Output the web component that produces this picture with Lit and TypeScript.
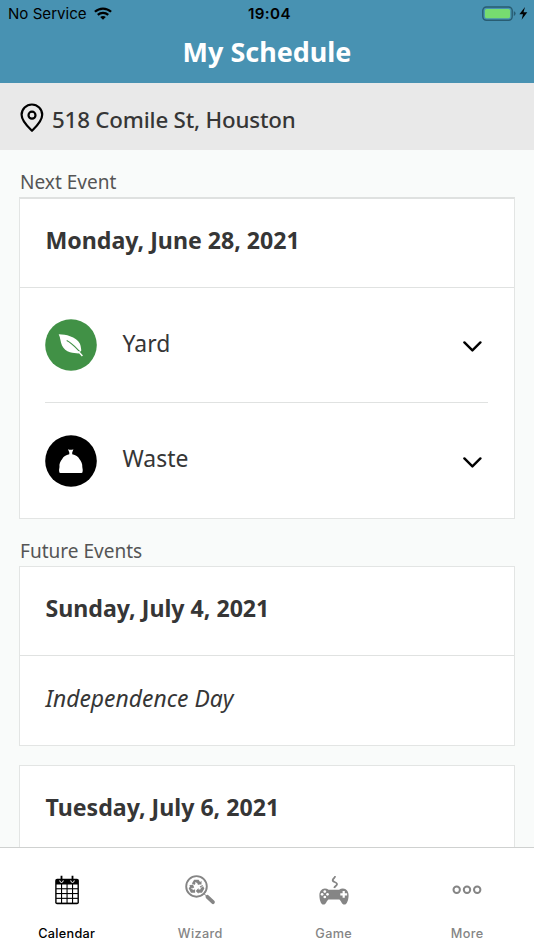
import { LitElement, html, css, svg } from "lit";
import { customElement, property } from "lit/decorators.js";

const wifi = svg`<svg class="wifi" width="18" height="13" viewBox="0 0 20 14" fill="none" stroke="#000" stroke-width="2.5">
  <path d="M1 5.1C6.2 .3 13.8 .3 19 5.1"/><path d="M4.2 8.5C7.5 5.4 12.5 5.4 15.8 8.5"/>
  <path d="M10 14L6.9 11C8.6 9.4 11.4 9.4 13.1 11Z" fill="#000" stroke="none"/></svg>`;

const battery = svg`<svg width="46" height="16" viewBox="0 0 46 16">
  <rect x=".8" y="1" width="29.4" height="13.2" rx="3.6" fill="none" stroke="#285c72" stroke-width="1.4"/>
  <rect x="2.9" y="3" width="25.2" height="9.2" rx="1.6" fill="#77dc70"/>
  <path d="M31.8 5.2Q33.6 5.7 33.6 7.6T31.8 10Z" fill="#285c72"/>
  <path d="M43 1L37.4 8.3H41L39.6 13.8L45.3 6.2H41.5Z" fill="#000"/></svg>`;

const pin = svg`<svg width="24" height="30" viewBox="0 0 24 30" fill="none" stroke="#000" stroke-width="2.2">
  <path d="M12 27.8C7.8 23.6 1.6 18.2 1.6 11.8A10.3 10.3 0 0 1 22.2 11.8C22.2 18.2 16.2 23.6 12 27.8Z" stroke-linejoin="round"/>
  <circle cx="12" cy="12.2" r="3.5"/></svg>`;

const chevron = svg`<svg width="20" height="13" viewBox="0 0 20 13" fill="none" stroke="#000" stroke-width="2.4" stroke-linecap="round" stroke-linejoin="round">
  <path d="M2.4 2.4L10.4 10.4L18.4 2.4"/></svg>`;

const leaf = svg`<svg width="52" height="52" viewBox="0 0 52 52">
  <circle cx="26" cy="26" r="25.8" fill="#419146"/>
  <path d="M13.7 15.3C18 15.7 21.5 15.9 25 17.2C29.5 18.6 33.2 21.2 34.8 24.6C35.7 26.6 36 28.8 36.3 31.6L33.6 34.4C30.5 34.2 28.2 34.3 25 33.3C21.4 32.2 18.6 30 17 26.6C15.4 23.2 15.6 19 13.7 15.3Z" fill="#fff"/>
  <path d="M21.7 21.6C26.5 24 30 27.8 34.6 32.4" fill="none" stroke="#419146" stroke-width="1.1"/>
  <path d="M33.4 32.6L37.4 36.9" stroke="#fff" stroke-width="1.5"/></svg>`;

const bag = svg`<svg width="52" height="52" viewBox="0 0 52 52">
  <circle cx="26" cy="26" r="25.8" fill="#000"/>
  <path d="M23 14.3Q25.7 15.3 28.4 14.3L27.2 17.6V19.2C30.8 19.8 33.2 21.4 34.4 24C36.2 26 37.6 29 37.3 32Q38 34.6 37.5 37.2Q37.2 37.9 36.5 37.9H15.3Q14.6 37.9 14.3 37.2Q13.8 34.6 14.5 32C14 29 15.4 26 17.2 24C18.4 21.4 20.8 19.8 24.3 19.2V17.6Z" fill="#fff"/></svg>`;

const tabIcons: Record<string, unknown> = {
  calendar: svg`<svg width="34" height="34" viewBox="0 0 34 34">
    <path d="M5.2 7.7Q5.2 5.8 7.1 5.8H27Q28.9 5.8 28.9 7.7V29.3Q28.9 31.2 27 31.2H7.1Q5.2 31.2 5.2 29.3Z" fill="currentColor"/>
    <g fill="#fff">${[11.5, 16.3, 21.1, 25.9].map(y => [6.6, 12.1, 17.6, 23.1].map(x =>
      svg`<rect x=${x} y=${y} width="4.4" height="3.7"/>`))}</g>
    <g fill="none"><path d="M9.8 7.3Q9.8 9.5 11.5 9.5T13.2 7.3M20.8 7.3Q20.8 9.5 22.5 9.5T24.2 7.3" stroke="#fff" stroke-width="1"/>
    <path d="M11.5 2.8V8M22.5 2.8V8" stroke="currentColor" stroke-width="1.8"/></g></svg>`,
  wizard: svg`<svg width="34" height="34" viewBox="0 0 34 34" fill="none" stroke="currentColor">
    <circle cx="13.5" cy="13.4" r="10.3" stroke-width="1.9"/>
    <path d="M24.4 23.8L30 29.2" stroke-width="3.7" stroke-linecap="round"/><path d="M21 20.8L24 23.4" stroke-width="1"/>
    <g stroke-width="3.1"><path d="M10.2 11.2L12 8.3H14.8L16.6 11"/><path d="M18.1 12.8L19.6 15.5L18.1 18.1H14.9"/><path d="M12.1 18.1H8.9L7.5 15.5L9.2 12.6"/></g>
    <path d="M14.4 11.4H18.5V7.7ZM15.5 15V20.8L12.8 18Z M6 12.4L10 11.5L11.3 15.3Z" fill="currentColor" stroke="none"/>
    <path d="M12.3 9L14 12M17.1 15L19.8 13.4M8.1 15.2L11 16.8" stroke="#fff" stroke-width=".65"/></svg>`,
  game: svg`<svg width="34" height="34" viewBox="0 0 34 34">
    <path d="M17.2 15C17.9 12.6 20.9 12.6 19.9 10.6C18.7 8.6 15 9.2 15.8 6.7C16.3 5.1 17.9 5.2 18.2 3.2" fill="none" stroke="currentColor" stroke-width="1.8"/>
    <g transform="translate(.3 .8)"><path d="M7.6 14.8Q9.8 14.8 11.3 16H21.8Q23.5 14.8 25.6 14.8C29.1 14.8 31.3 18 31.3 21.4C31.3 25.2 30 30.8 27 30.8C24.6 30.8 24.1 27.2 22.1 25.6H11.1C9.1 27.2 8.7 30.8 6.3 30.8C3.3 30.8 2.1 25.2 2.1 21.4C2.1 18 4.3 14.8 7.6 14.8Z" fill="currentColor"/>
    <g fill="#fff"><circle cx="7.5" cy="17.8" r="1.35"/><circle cx="7.5" cy="23.2" r="1.35"/><circle cx="4.8" cy="20.5" r="1.35"/><circle cx="10.2" cy="20.5" r="1.35"/>
    <path d="M25.3 17.1H27.5V19.4H29.8V21.6H27.5V23.9H25.3V21.6H23V19.4H25.3Z"/></g></g></svg>`,
  more: svg`<svg width="34" height="34" viewBox="0 0 34 34" fill="none" stroke="currentColor" stroke-width="2">
    <circle cx="6.7" cy="16.8" r="3.2"/><circle cx="17" cy="16.8" r="3.2"/><circle cx="27.2" cy="16.8" r="3.2"/></svg>`,
};

@customElement("event-card")
class EventCard extends LitElement {
  @property() date = "";
  static styles = css`
    :host { display: block; background: #fff; border: 1px solid #e3e5e4; }
    .date { height: 89px; box-sizing: border-box; padding: 0 25.5px 7px; display: flex; align-items: center;
      border-bottom: 1px solid #e0e2e1; font-weight: 700; font-size: 23.15px; color: #363636; white-space: nowrap; }
  `;
  render() {
    return html`<div class="date">${this.date}</div><slot></slot>`;
  }
}

@customElement("app-root")
class AppRoot extends LitElement {
  static styles = css`
    :host { display: flex; flex-direction: column; height: 950px; overflow: hidden; background: #f9fbfa;
      color: #363636; font-family: "Noto Sans", "Open Sans", sans-serif; }
    svg { display: block; flex: none; }
    header { height: 83px; background: #4892b2; flex: none; }
    .status { height: 28px; box-sizing: border-box; padding: 0 6px 0 8px; display: grid; grid-template-columns: 1fr auto 1fr;
      align-items: center; font-family: Inter, sans-serif; font-size: 15.1px; color: #000; }
    .carrier { display: flex; align-items: center; gap: 7.5px; }
    .carrier span, .clock { padding-bottom: 1px; }
    .wifi { margin-top: -2px; }
    .clock { font-weight: 600; font-size: 15.2px; letter-spacing: .4px; padding-left: 3px; }
    .power { justify-self: end; }
    h1 { margin: 0; height: 49px; line-height: 48px; text-align: center; font-size: 26.95px; font-weight: 700; color: #fff; }
    .address { height: 67px; flex: none; box-sizing: border-box; padding: 3px 20px 0; display: flex; align-items: center; gap: 8px;
      background: #e9e9e9; font-size: 22.3px; font-weight: 500; letter-spacing: -.18px; }
    .address span { padding-top: 2px; }
    main { flex: 1; min-height: 0; overflow: hidden; padding: 0 19px; }
    h2 { margin: 0; padding: 19px 0 2px 1px; font-size: 19.05px; font-weight: 400; line-height: 26px; color: #555; }
    .first { border-top: 2px solid #dfe1e0; }
    .row { height: 114px; box-sizing: border-box; margin: 0 26px 0 25px; padding-right: 6px; display: flex; align-items: center;
      font-size: 22.9px; }
    .row + .row { height: 116px; border-top: 1px solid #e0e2e1; }
    .row .name { flex: 1; margin-left: 25.5px; padding-bottom: 4px; }
    .row svg:last-child { margin-top: 3px; }
    .holiday { height: 89px; box-sizing: border-box; padding: 0 25px 5px 25.5px; display: flex; align-items: center;
      font-size: 22.9px; font-style: italic; }
    .gap { margin-top: 19px; }
    nav { height: 103px; flex: none; box-sizing: border-box; border-top: 1px solid #cfd1d0; background: #fff;
      display: grid; grid-template-columns: repeat(4, 1fr); font-family: Inter, sans-serif; }
    .tab { display: flex; flex-direction: column; align-items: center; padding-top: 25px; color: #858585;
      font-size: 12.7px; font-weight: 450; line-height: 18px; letter-spacing: .35px; }
    .tab span { margin-top: 18px; }
    .tab.active { color: #000; font-weight: 500; letter-spacing: .27px; }
  `;

  tabs = [["calendar", "Calendar"], ["wizard", "Wizard"], ["game", "Game"], ["more", "More"]];

  render() {
    return html`
      <header>
        <div class="status">
          <div class="carrier"><span>No Service</span>${wifi}</div>
          <div class="clock">19:04</div>
          <div class="power">${battery}</div>
        </div>
        <h1>My Schedule</h1>
      </header>
      <div class="address">${pin}<span>518 Comile St, Houston</span></div>
      <main>
        <h2>Next Event</h2>
        <event-card class="first" date="Monday, June 28, 2021">
          <div class="row">${leaf}<span class="name">Yard</span>${chevron}</div>
          <div class="row">${bag}<span class="name">Waste</span>${chevron}</div>
        </event-card>
        <h2>Future Events</h2>
        <event-card date="Sunday, July 4, 2021">
          <div class="holiday">Independence Day</div>
        </event-card>
        <event-card class="gap" date="Tuesday, July 6, 2021"></event-card>
      </main>
      <nav>
        ${this.tabs.map(([id, label], i) => html`
          <div class="tab ${i === 0 ? "active" : ""}">${tabIcons[id]}<span>${label}</span></div>`)}
      </nav>`;
  }
}
